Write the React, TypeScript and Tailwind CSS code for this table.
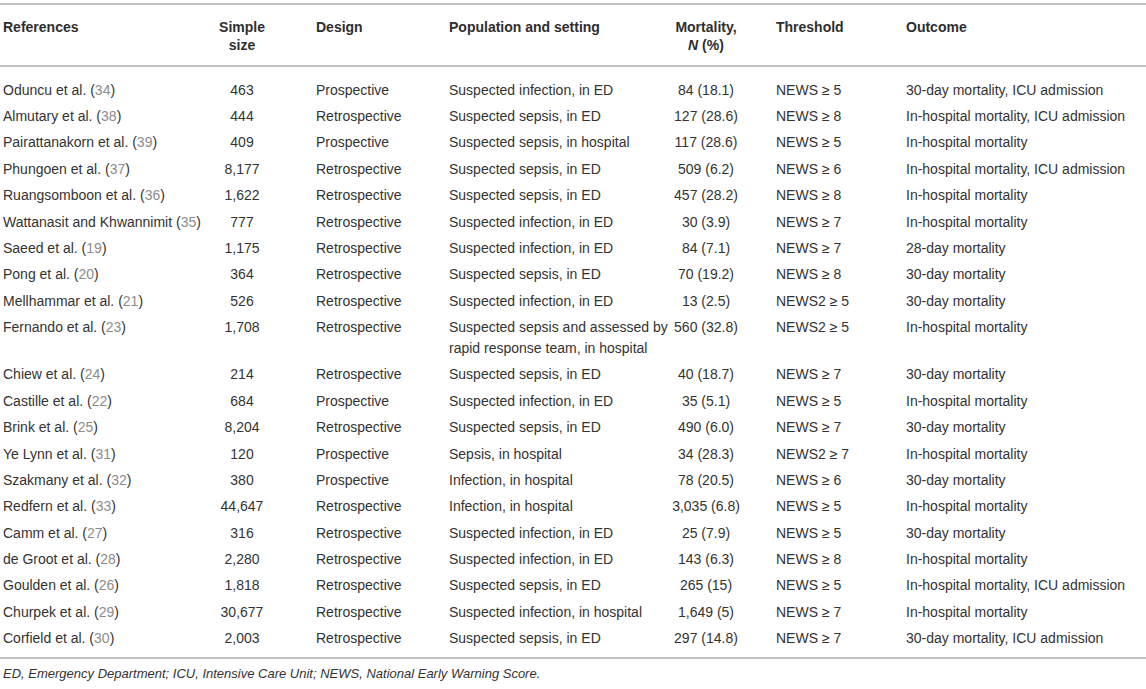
const rows: [string, string, string, string, string, string, string, string][] = [
    ["Oduncu et al.", "34", "463", "Prospective", "Suspected infection, in ED", "84 (18.1)", "NEWS ≥ 5", "30-day mortality, ICU admission"],
    ["Almutary et al.", "38", "444", "Retrospective", "Suspected sepsis, in ED", "127 (28.6)", "NEWS ≥ 8", "In-hospital mortality, ICU admission"],
    ["Pairattanakorn et al.", "39", "409", "Prospective", "Suspected sepsis, in hospital", "117 (28.6)", "NEWS ≥ 5", "In-hospital mortality"],
    ["Phungoen et al.", "37", "8,177", "Retrospective", "Suspected sepsis, in ED", "509 (6.2)", "NEWS ≥ 6", "In-hospital mortality, ICU admission"],
    ["Ruangsomboon et al.", "36", "1,622", "Retrospective", "Suspected sepsis, in ED", "457 (28.2)", "NEWS ≥ 8", "In-hospital mortality"],
    ["Wattanasit and Khwannimit", "35", "777", "Retrospective", "Suspected infection, in ED", "30 (3.9)", "NEWS ≥ 7", "In-hospital mortality"],
    ["Saeed et al.", "19", "1,175", "Retrospective", "Suspected infection, in ED", "84 (7.1)", "NEWS ≥ 7", "28-day mortality"],
    ["Pong et al.", "20", "364", "Retrospective", "Suspected sepsis, in ED", "70 (19.2)", "NEWS ≥ 8", "30-day mortality"],
    ["Mellhammar et al.", "21", "526", "Retrospective", "Suspected infection, in ED", "13 (2.5)", "NEWS2 ≥ 5", "30-day mortality"],
    ["Fernando et al.", "23", "1,708", "Retrospective", "Suspected sepsis and assessed by\nrapid response team, in hospital", "560 (32.8)", "NEWS2 ≥ 5", "In-hospital mortality"],
    ["Chiew et al.", "24", "214", "Retrospective", "Suspected sepsis, in ED", "40 (18.7)", "NEWS ≥ 7", "30-day mortality"],
    ["Castille et al.", "22", "684", "Prospective", "Suspected infection, in ED", "35 (5.1)", "NEWS ≥ 5", "In-hospital mortality"],
    ["Brink et al.", "25", "8,204", "Retrospective", "Suspected sepsis, in ED", "490 (6.0)", "NEWS ≥ 7", "30-day mortality"],
    ["Ye Lynn et al.", "31", "120", "Prospective", "Sepsis, in hospital", "34 (28.3)", "NEWS2 ≥ 7", "In-hospital mortality"],
    ["Szakmany et al.", "32", "380", "Prospective", "Infection, in hospital", "78 (20.5)", "NEWS ≥ 6", "30-day mortality"],
    ["Redfern et al.", "33", "44,647", "Retrospective", "Infection, in hospital", "3,035 (6.8)", "NEWS ≥ 5", "In-hospital mortality"],
    ["Camm et al.", "27", "316", "Retrospective", "Suspected infection, in ED", "25 (7.9)", "NEWS ≥ 5", "30-day mortality"],
    ["de Groot et al.", "28", "2,280", "Retrospective", "Suspected infection, in ED", "143 (6.3)", "NEWS ≥ 8", "In-hospital mortality"],
    ["Goulden et al.", "26", "1,818", "Retrospective", "Suspected sepsis, in ED", "265 (15)", "NEWS ≥ 5", "In-hospital mortality, ICU admission"],
    ["Churpek et al.", "29", "30,677", "Retrospective", "Suspected infection, in hospital", "1,649 (5)", "NEWS ≥ 7", "In-hospital mortality"],
    ["Corfield et al.", "30", "2,003", "Retrospective", "Suspected sepsis, in ED", "297 (14.8)", "NEWS ≥ 7", "30-day mortality, ICU admission"],
];

// shared column template so header and body line up
const cols = "grid grid-cols-[204px_76px_169px_217px_80px_160px_240px]";

export default function App() {
    return (
        <div className="w-[1146px] h-[689px] bg-white text-[#333] text-[14px] font-['Liberation_Sans',Arial,sans-serif]">
            <div className="pt-[3px]">
                {/* Header */}
                <div className={`${cols} border-t-2 border-b-2 border-[#c2c2c2] pt-[13px] pb-[11px] font-bold leading-[18px] text-[#2e2e2e]`}>
                    <div className="pl-[3px]">References</div>
                    <div className="text-center">Simple<br />size</div>
                    <div className="pl-[36px]">Design</div>
                    <div className="whitespace-nowrap">Population and setting</div>
                    <div className="text-center">Mortality,<br /><i>N</i> (%)</div>
                    <div className="pl-[30px]">Threshold</div>
                    <div>Outcome</div>
                </div>

                {/* Body */}
                <div className="pt-[10px] pb-[5px] border-b-2 border-[#c2c2c2] leading-[21px]">
                    {rows.map(([ref, num, size, design, pop, mort, thresh, outcome]) => (
                        <div key={ref} className={`${cols} py-[2.7px] whitespace-nowrap`}>
                            <div className="pl-[3px]">
                                {ref} (<span className="text-[#8c8c8c]">{num}</span>)
                            </div>
                            <div className="text-center">{size}</div>
                            <div className="pl-[36px]">{design}</div>
                            <div className="whitespace-pre">{pop}</div>
                            <div className="text-center">{mort}</div>
                            <div className="pl-[30px]">{thresh}</div>
                            <div>{outcome}</div>
                        </div>
                    ))}
                </div>

                {/* Footnote */}
                <p className="pl-[3px] pt-[6px] italic text-[13px] leading-[18px]">
                    ED, Emergency Department; ICU, Intensive Care Unit; NEWS, National Early Warning Score.
                </p>
            </div>
        </div>
    );
}
